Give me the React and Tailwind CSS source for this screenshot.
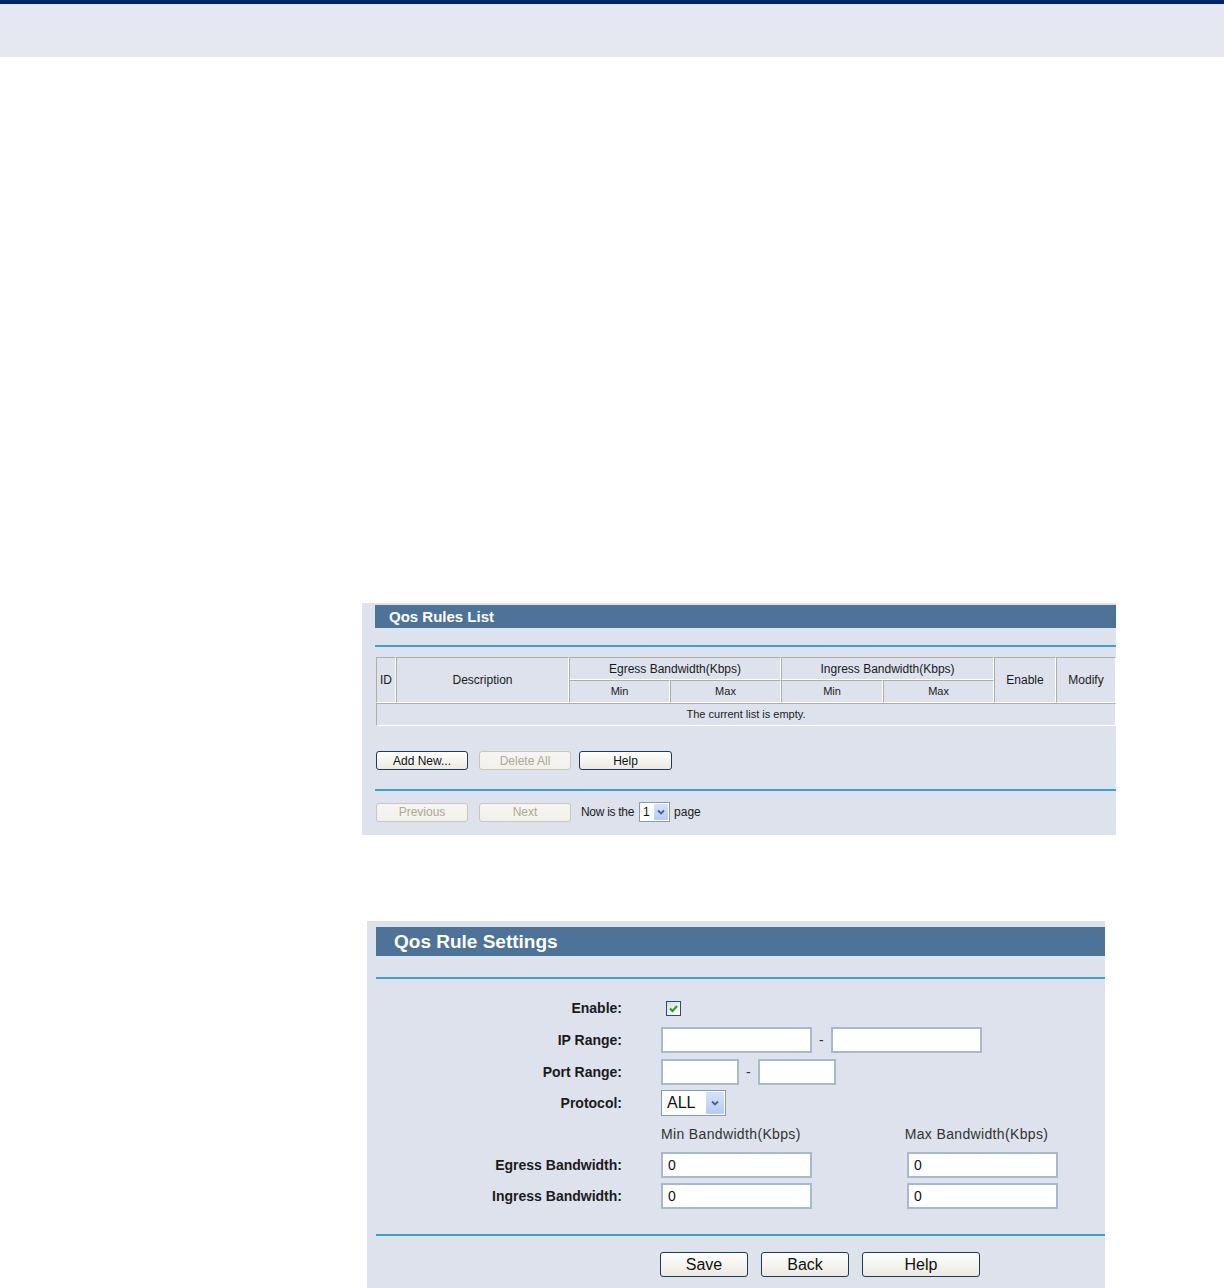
import React from "react";

const font = { fontFamily: '"Liberation Sans", Arial, sans-serif' };

function XpButton({ children, disabled, className = "" }) {
  return (
    <button
      className={
        "rounded-[3px] border bg-gradient-to-b leading-none " +
        (disabled
          ? "border-[#c9c7ba] from-[#f6f5f1] to-[#f1f0ea] text-[#aca899] "
          : "border-[#1d3a5b] from-white to-[#ebe9e0] text-[#111] ") +
        className
      }
    >
      {children}
    </button>
  );
}

function Chevron({ size = 8 }) {
  return (
    <svg width={size} height={size} viewBox="0 0 8 8">
      <path d="M1 2.5 L4 5.5 L7 2.5" fill="none" stroke="#4d6185" strokeWidth="1.8" />
    </svg>
  );
}

function Select({ value, className = "", btn = "w-[14px]", text = "" }) {
  return (
    <div className={"flex items-stretch border border-[#7f9db9] bg-white " + className}>
      <span className={"flex-1 pl-[3px] flex items-center text-[#111] " + text}>{value}</span>
      <span className={"m-[1px] flex items-center justify-center rounded-[1px] bg-gradient-to-b from-[#d5e2fc] to-[#b7cbf5] " + btn}>
        <Chevron />
      </span>
    </div>
  );
}

function Input({ w, value }) {
  return (
    <div className={"h-[26px] border-2 border-[#a7b8cf] bg-white flex items-center pl-[5px] text-[14px] text-[#111] " + w}>
      {value}
    </div>
  );
}

const th = "border-t border-l border-[#aeaea6] border-r-white border-b-white border-r border-b font-normal";

function RulesList() {
  return (
    <div className="ml-[362px] w-[754px] h-[232px] bg-[#dde2ec] pt-[2px] pl-[13px]">
      <div className="h-[23px] bg-[#4e7399] text-white font-bold text-[15px] pl-[14px] leading-[23px]">Qos Rules List</div>
      <div className="h-[17px]" />
      <div className="h-[2px] bg-[#3aa2d3]" />
      <div className="h-[10px]" />
      <table className="ml-[1px] w-[740px] table-fixed text-[12px] text-[#1b1b1b]" style={{ borderCollapse: "separate", borderSpacing: 0 }}>
        <colgroup>
          <col className="w-[20px]" />
          <col className="w-[173px]" />
          <col className="w-[101px]" />
          <col className="w-[111px]" />
          <col className="w-[102px]" />
          <col className="w-[111px]" />
          <col className="w-[62px]" />
          <col className="w-[60px]" />
        </colgroup>
        <thead>
          <tr className="h-[23px]">
            <th rowSpan={2} className={th}>ID</th>
            <th rowSpan={2} className={th}>Description</th>
            <th colSpan={2} className={th}>Egress Bandwidth(Kbps)</th>
            <th colSpan={2} className={th}>Ingress Bandwidth(Kbps)</th>
            <th rowSpan={2} className={th}>Enable</th>
            <th rowSpan={2} className={th}>Modify</th>
          </tr>
          <tr className="h-[23px] text-[11px]">
            <th className={th}>Min</th>
            <th className={th}>Max</th>
            <th className={th}>Min</th>
            <th className={th}>Max</th>
          </tr>
        </thead>
        <tbody>
          <tr className="h-[23px] text-[11px]">
            <td colSpan={8} className={th + " text-center border-b-[#aeaea6]"}>The current list is empty.</td>
          </tr>
        </tbody>
      </table>
      <div className="flex items-center h-[19px] mt-[25px] ml-[1px] text-[12px]">
        <XpButton className="w-[92px] h-[19px]">Add New...</XpButton>
        <XpButton disabled className="w-[92px] h-[19px] ml-[11px]">Delete All</XpButton>
        <XpButton className="w-[93px] h-[19px] ml-[8px]">Help</XpButton>
      </div>
      <div className="h-[19px]" />
      <div className="h-[2px] bg-[#3aa2d3]" />
      <div className="flex items-center h-[20px] mt-[11px] ml-[1px] text-[12px]">
        <XpButton disabled className="w-[92px] h-[19px]">Previous</XpButton>
        <XpButton disabled className="w-[92px] h-[19px] ml-[11px]">Next</XpButton>
        <span className="ml-[10px] text-[#1b1b1b] tracking-[-0.3px]">Now is the</span>
        <Select value="1" className="ml-[5px] w-[31px] h-[20px]" />
        <span className="ml-[4px] text-[#1b1b1b]">page</span>
      </div>
    </div>
  );
}

function Row({ label, children, h, mt = "" }) {
  return (
    <div className={"flex items-center " + h + " " + mt}>
      <div className="w-[246px] text-right font-bold text-[14px] text-[#1b1b1b]">{label}</div>
      <div className="ml-[39px] flex items-center">{children}</div>
    </div>
  );
}

function RuleSettings() {
  return (
    <div className="ml-[367px] mt-[86px] w-[738px] h-[367px] bg-[#dde2ec] pt-[6px] pl-[9px]">
      <div className="h-[29px] bg-[#4e7399] text-white font-bold text-[19px] pl-[18px] leading-[29px]">Qos Rule Settings</div>
      <div className="h-[21px]" />
      <div className="h-[2px] bg-[#3aa2d3]" />
      <Row label="Enable:" h="h-[17px]" mt="mt-[21px]">
        <div className="ml-[5px] w-[15px] h-[15px] border border-[#1c5180] bg-gradient-to-br from-[#dcdcd7] to-white flex items-center justify-center">
          <svg width="11" height="11" viewBox="0 0 11 11">
            <path d="M2 5.5 L4.5 8 L9 3" fill="none" stroke="#21a121" strokeWidth="2" />
          </svg>
        </div>
      </Row>
      <Row label="IP Range:" h="h-[26px]" mt="mt-[10px]">
        <Input w="w-[151px]" />
        <span className="mx-[7px] text-[14px] text-[#333]">-</span>
        <Input w="w-[151px]" />
      </Row>
      <Row label="Port Range:" h="h-[26px]" mt="mt-[6px]">
        <Input w="w-[78px]" />
        <span className="mx-[7px] text-[14px] text-[#333]">-</span>
        <Input w="w-[78px]" />
      </Row>
      <Row label="Protocol:" h="h-[26px]" mt="mt-[5px]">
        <Select value="ALL" className="w-[65px] h-[26px]" btn="w-[18px]" text="text-[16px] pl-[5px]" />
      </Row>
      <div className="flex mt-[10px] h-[16px] text-[14px] text-[#333] leading-[16px] tracking-[0.35px]">
        <span className="ml-[285px]">Min Bandwidth(Kbps)</span>
        <span className="ml-[104px]">Max Bandwidth(Kbps)</span>
      </div>
      <Row label="Egress Bandwidth:" h="h-[26px]" mt="mt-[10px]">
        <Input w="w-[151px]" value="0" />
        <div className="w-[95px]" />
        <Input w="w-[151px]" value="0" />
      </Row>
      <Row label="Ingress Bandwidth:" h="h-[26px]" mt="mt-[5px]">
        <Input w="w-[151px]" value="0" />
        <div className="w-[95px]" />
        <Input w="w-[151px]" value="0" />
      </Row>
      <div className="h-[25px]" />
      <div className="h-[2px] bg-[#3aa2d3]" />
      <div className="flex mt-[16px] ml-[284px] text-[16px]">
        <XpButton className="w-[88px] h-[25px]">Save</XpButton>
        <XpButton className="w-[88px] h-[25px] ml-[13px]">Back</XpButton>
        <XpButton className="w-[118px] h-[25px] ml-[13px]">Help</XpButton>
      </div>
    </div>
  );
}

export default function App() {
  return (
    <div className="w-[1224px] h-[1288px] bg-white overflow-hidden" style={font}>
      <div className="h-[4px] bg-[#00266a]" />
      <div className="h-[53px] bg-[#e5e8f1]" />
      <div className="h-[546px]" />
      <RulesList />
      <RuleSettings />
    </div>
  );
}
